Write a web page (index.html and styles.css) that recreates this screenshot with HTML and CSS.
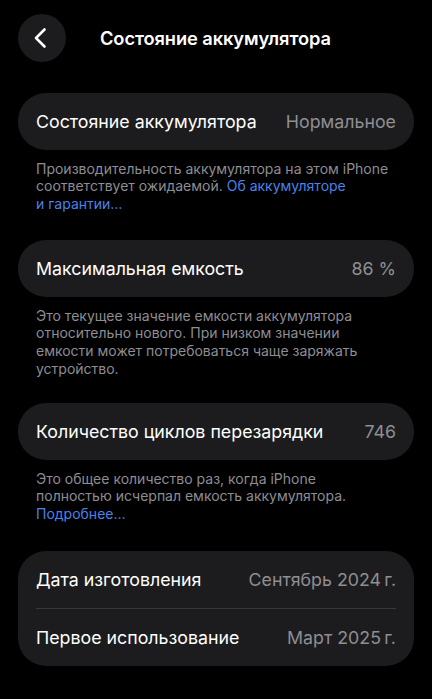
FILE: index.html
```html
<!DOCTYPE html>
<html lang="ru">
<head>
<meta charset="utf-8">
<link rel="stylesheet" href="styles.css">
</head>
<body>
<div class="screen">
  <header class="nav">
    <div class="back">
      <svg width="22" height="22" viewBox="0 0 22 22"><path d="M14.5 2.5 L6 11 L14.5 19.5" fill="none" stroke="#fff" stroke-width="2.6" stroke-linecap="round" stroke-linejoin="round"/></svg>
    </div>
    <h1 class="title">Состояние аккумулятора</h1>
  </header>

  <section class="group g1">
    <div class="card">
      <div class="row"><span class="label">Состояние аккумулятора</span><span class="value">Нормальное</span></div>
    </div>
    <p class="note">Производительность аккумулятора на этом iPhone<br>соответствует ожидаемой. <span class="link">Об аккумуляторе<br>и гарантии…</span></p>
  </section>

  <section class="group g2">
    <div class="card">
      <div class="row"><span class="label">Максимальная емкость</span><span class="value">86 %</span></div>
    </div>
    <p class="note">Это текущее значение емкости аккумулятора<br>относительно нового. При низком значении<br>емкости может потребоваться чаще заряжать<br>устройство.</p>
  </section>

  <section class="group g3">
    <div class="card">
      <div class="row"><span class="label">Количество циклов перезарядки</span><span class="value">746</span></div>
    </div>
    <p class="note">Это общее количество раз, когда iPhone<br>полностью исчерпал емкость аккумулятора.<br><span class="link">Подробнее…</span></p>
  </section>

  <section class="group g4">
    <div class="card multi">
      <div class="row"><span class="label">Дата изготовления</span><span class="value">Сентябрь 2024&#8201;г.</span></div>
      <div class="sep"></div>
      <div class="row"><span class="label">Первое использование</span><span class="value">Март 2025&#8201;г.</span></div>
    </div>
  </section>
</div>
</body>
</html>
```
FILE: styles.css
```css
html, body {
  margin: 0;
  padding: 0;
  background: #000;
}
body {
  font-family: Inter, "Noto Sans", "Liberation Sans", sans-serif;
  color: #fff;
  -webkit-font-smoothing: antialiased;
}
.screen {
  width: 432px;
  height: 699px;
  overflow: hidden;
  padding: 14px 18px 0;
  box-sizing: border-box;
}
.nav {
  display: flex;
  align-items: center;
  height: 48px;
  gap: 34px;
}
.back {
  width: 48px;
  height: 48px;
  border-radius: 50%;
  background: #1c1c1e;
  display: flex;
  align-items: center;
  justify-content: center;
  flex: none;
}
.back svg { margin-left: -2px; }
.title {
  margin: 0;
  font-size: 18.3px;
  font-weight: 600;
  letter-spacing: -0.1px;
}
.g1 { margin-top: 31px; }
.g2 { margin-top: 28px; }
.g3 { margin-top: 26px; }
.g4 { margin-top: 29px; }
.card {
  background: #1c1c1e;
  border-radius: 28px;
  padding: 0 18px;
}
.row {
  display: flex;
  justify-content: space-between;
  align-items: center;
  height: 56.5px;
  font-size: 17.8px;
}
.multi .row { height: 57px; }
.label { color: #fff; }
.value { color: #8e8e93; }
.sep {
  height: 1px;
  background: #38383a;
}
.note {
  margin: 10px 18px 0;
  font-size: 14px;
  line-height: 17.6px;
  color: #8d8d92;
  white-space: nowrap;
}
.link { color: #4a82ea; }
```
